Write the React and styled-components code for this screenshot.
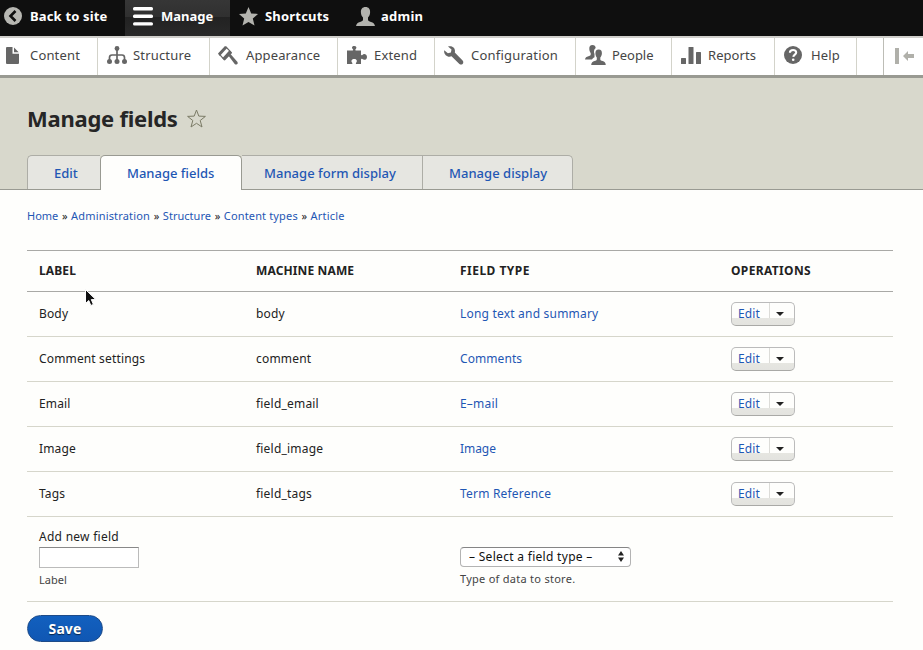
import React from "react";
import styled, { createGlobalStyle, css } from "styled-components";

const GlobalStyle = createGlobalStyle`
  * { box-sizing: border-box; }
  html, body { margin: 0; height: 100%; overflow: hidden; }
  body { background: #fefefc; color: #222; font: 12px/18px "Noto Sans", "Open Sans", sans-serif; }
  a { color: #1f57b4; text-decoration: none; }
`;

const Page = styled.div`
  width: 923px;
  height: 650px;
  overflow: hidden;
`;

const TopBar = styled.nav`
  display: flex;
  height: 36px;
  background: #0f0f0f;
`;

const Spaced = css`
  letter-spacing: ${(p) => p.$ls || 0}px;
  white-space: nowrap;
`;

const TopItem = styled.a`
  ${Spaced}
  && { color: #fff; }
  display: grid;
  grid-template-columns: ${(p) => p.$slot}px auto;
  justify-content: start;
  align-items: center;
  width: ${(p) => p.$w}px;
  padding: 0 0 4px ${(p) => p.$pad}px;
  font-size: 13px;
  font-weight: 700;
  ${(p) => p.$active && css`background: linear-gradient(#363636 0, #303030 17px, #222 17px, #292929 100%);`}
`;

const Tray = styled.nav`
  display: flex;
  height: 42px;
  background: #fff;
  border-top: 2px solid #d0cfcb;
  border-bottom: 3px solid #999a92;
  box-shadow: 0 1px 0 #c5c5b9;
`;

const TrayItem = styled.a`
  ${Spaced}
  && { color: #454545; }
  display: grid;
  grid-template-columns: ${(p) => p.$slot}px auto;
  justify-content: start;
  align-items: center;
  width: ${(p) => p.$w}px;
  padding: 0 0 3px ${(p) => p.$pad}px;
  border-right: 1px solid #d3d3ca;
  font-size: 13px;
`;

const TrayToggle = styled.div`
  display: flex;
  align-items: center;
  margin-left: 26px;
  width: 40px;
  padding: 0 0 2px 11px;
  border-left: 1px solid #bdbdb6;
`;

const Header = styled.header`
  display: flex;
  flex-direction: column;
  justify-content: space-between;
  height: 112px;
  padding: 25px 27px 0;
  background: #d8d8cc;
  border-bottom: 1px solid #999a92;
`;

const TitleRow = styled.div`
  display: flex;
  align-items: center;
  gap: 9px;
`;

const Title = styled.h1`
  margin: 0;
  font-size: 22px;
  line-height: 30px;
  letter-spacing: -0.25px;
  color: #262626;
`;

const Tabs = styled.div`
  display: flex;
  height: 34px;
`;

const Tab = styled.a`
  ${Spaced}
  width: ${(p) => p.$w}px;
  height: ${(p) => (p.$active ? 35 : 34)}px;
  padding-left: ${(p) => p.$pad}px;
  font-size: 13px;
  font-weight: 500;
  line-height: 34px;
  background: ${(p) => (p.$active ? "#fefefc" : "#e6e6e1")};
  border: 1px solid #adada6;
  border-width: 1px ${(p) => (p.$openRight ? 0 : 1)}px 0 ${(p) => (p.$left ? 1 : 0)}px;
  border-color: ${(p) => (p.$active ? "#999a92" : "#adada6")};
  border-radius: ${(p) => p.$radius};
`;

const Content = styled.main`
  padding: 16px 30px 0 27px;
`;

const Breadcrumb = styled.nav`
  height: 20px;
  font-size: 11px;
  line-height: 20px;
  white-space: nowrap;
  display: flex;
`;

const Crumb = styled.a`${Spaced}`;

const Arrow = styled.span`
  width: 12.8px;
  text-align: center;
`;

const Table = styled.table`
  width: 866px;
  margin-top: 24px;
  table-layout: fixed;
  border-collapse: separate;
  border-spacing: 0;
`;

const Th = styled.th`
  ${Spaced}
  width: ${(p) => p.$w}px;
  height: 42px;
  padding: 0 0 0 12px;
  text-align: left;
  font-weight: 700;
  border-top: 1px solid #a9a9a6;
  border-bottom: 1px solid #a9a9a6;
`;

const Td = styled.td`
  ${Spaced}
  height: ${(p) => p.$h || 45}px;
  padding: 0 0 0 12px;
  vertical-align: middle;
  border-bottom: 1px solid #d6d6cb;
`;

const DropButton = styled.div`
  display: grid;
  grid-template-columns: 37px 1fr;
  width: 64px;
  height: 24px;
  background: linear-gradient(#fefefc 0, #fefefc 15px, #e6e6e1 15px, #e3e3df 100%);
  border: 1px solid #bbb;
  border-bottom-color: #a9a9a6;
  border-radius: 5px;
`;

const DropAction = styled.a`
  padding-left: 6px;
  line-height: 21px;
  letter-spacing: 0.15px;
`;

const DropToggle = styled.span`
  display: flex;
  height: 22px;
  padding: 0 0 0 7px;
  align-items: center;
  background: linear-gradient(#dcdcd8, #dcdcd8) left top / 1px 15px no-repeat;
`;

const Field = styled.div`
  display: flex;
  flex-direction: column;
  height: 84px;
  padding-top: ${(p) => p.$top}px;
`;

const FieldLabel = styled.label`
  ${Spaced}
  height: 19px;
`;

const TextInput = styled.input`
  width: 100px;
  height: 21px;
  padding: 0;
  background: #fff;
  border: 1px solid #bbb;
  border-top-color: #888;
  border-radius: 0;
`;

const Hint = styled.div`
  ${Spaced}
  margin-top: 4px;
  font-size: 11px;
  line-height: 16px;
  color: #444;
`;

const Select = styled.div`
  display: flex;
  justify-content: space-between;
  align-items: center;
  width: 171px;
  height: 20px;
  padding: 0 6px 1px 8px;
  color: #111;
  letter-spacing: 0.3px;
  background: #fff;
  border: 1px solid #b3b3b3;
  border-top-color: #858585;
  border-radius: 4px;
`;

const SaveButton = styled.button`
  display: block;
  width: 76px;
  height: 27px;
  margin-top: 13px;
  padding: 1px 0 0;
  font: 700 14px/24px "Noto Sans", "Open Sans", sans-serif;
  letter-spacing: 0.1px;
  color: #fff;
  text-shadow: 0 1px 1px rgba(0, 0, 0, 0.6);
  background: linear-gradient(#1260bf, #1057b3);
  border: 1px solid #1e4b88;
  border-radius: 14px;
`;

const Pointer = styled.svg`
  position: absolute;
  left: 84px;
  top: 288px;
`;

const Svg = ({ w, h, children, ...rest }) => (
  <svg width={w} height={h} viewBox={`0 0 ${w} ${h}`} fill="#666" {...rest}>
    {children}
  </svg>
);

const BackIcon = () => (
  <Svg w={18} h={18}>
    <circle cx="9" cy="9" r="9" fill="#b7b7b2" />
    <path d="M11.500 4 6.500 9l5 5" stroke="#0f0f0f" strokeWidth="2.600" fill="none" />
  </Svg>
);
const MenuIcon = () => (
  <Svg w={20} h={19} fill="#fff">
    <rect width="20" height="3.400" rx="1.500" />
    <rect y="7.600" width="20" height="3.400" rx="1.500" />
    <rect y="15.200" width="20" height="3.400" rx="1.500" />
  </Svg>
);
const StarIcon = () => (
  <Svg w={19} h={19} fill="#b3b3ae">
    <path d="M9.500 0 12.200 6.400l6.800.5-5.200 4.600 1.700 6.900-6-3.500-6 3.500 1.700-6.900L0 6.900l6.800-.5z" />
  </Svg>
);
const UserIcon = () => (
  <Svg w={19} h={19} fill="#b3b3ae">
    <path d="M9.500 0C6.300 0 4.800 2.200 4.900 5.200c.1 2.300 1 4.300 2.100 5.300v2.200c0 1.200-1.200 1.700-3 2.300C1.800 15.700.5 16.500 0 19h19c-.5-2.500-1.800-3.300-4-4-1.800-.6-3-1.100-3-2.300v-2.200c1.100-1 2-3 2.100-5.300C14.200 2.200 12.700 0 9.500 0z" />
  </Svg>
);
const FileIcon = () => (
  <Svg w={13} h={17}>
    <path d="M1 0h5.500v6.700H13V16q0 1-1 1H1q-1 0-1-1V1q0-1 1-1zM8 .5 12.700 5.200H8z" />
  </Svg>
);
const StructureIcon = () => (
  <Svg w={20} h={18}>
    <circle cx="10" cy="2.500" r="2.400" />
    <path d="M10 3v11M2.500 15v-3.500q0-2.500 2.500-2.500h10q2.500 0 2.500 2.500V15" fill="none" stroke="#666" strokeWidth="1.700" />
    <circle cx="2.500" cy="15.400" r="2.500" />
    <circle cx="10" cy="15.400" r="2.500" />
    <circle cx="17.500" cy="15.400" r="2.500" />
  </Svg>
);
const AppearanceIcon = () => (
  <Svg w={20} h={19}>
    <path d="M0 7.500 7 0l2.200 2-7.400 7.900zM4.300 12.300l7.200-8L14 7l-7.200 7.500z" />
    <path d="M1.400 8.200 8 1l5.200 5.400-7 7.200z" fill="none" stroke="#666" strokeWidth="1.200" />
    <path d="m10.500 9.800 2-1.800 6.800 7.800q1 1.500-.3 2.500-1.200.8-2.300-.4z" />
  </Svg>
);
const ExtendIcon = () => (
  <Svg w={20} h={18}>
    <path d="M0 4.500h5.600c.8 0 .7-1 .1-1.500C4.500 2 4.800 0 7.200 0s2.800 2 1.600 3c-.7.500-.7 1.500.1 1.500H14v4c0 1 .9 1 1.400.4C16.700 7.300 20 8 20 11s-3.300 3.500-4.600 2c-.5-.6-1.400-.5-1.400.5V18H9.500c-.9 0-.7-1-.2-1.600 1.300-1.500.3-3.400-2.100-3.400s-3.500 1.900-2.200 3.400c.6.600.6 1.600-.2 1.600H0z" />
  </Svg>
);
const WrenchIcon = () => (
  <Svg w={20} h={19}>
    <path d="M4 .6C6.800-.6 11 .8 11 5c0 .7-.1 1-.2 1.500l7.800 8c2 2.200-.8 5.500-3.200 3.400L7.500 10.300C3.500 11.800-.5 8.500.2 4.200l3.700 3 3-.8.6-3z" />
  </Svg>
);
const PeopleIcon = () => (
  <Svg w={21} h={20}>
    <path d="M7.500 0C5.200 0 4.200 1.600 4.300 4c.1 1.700.6 3.200 1.400 4v1.600c0 1-1 1.300-2.300 1.700C1.500 11.900.3 12.500 0 14.500h7c.5-1.200 2-1.800 2.500-2.200V9c-.8-1.500-.9-4.700 1.200-6C10.500 1.200 9.500 0 7.500 0z" />
    <path d="M13.700 4.500c-2.400 0-3.400 1.600-3.300 4 .1 1.700.6 3.200 1.400 4v2c0 .9-1 1.200-2.300 1.600C7.500 16.800 6.500 17.500 6.200 20h14.600c-.3-2.500-1.300-3.200-3.200-3.900-1.300-.4-2.300-.7-2.300-1.600v-2c.8-.8 1.500-2.300 1.600-4 .1-2.400-.9-4-3.200-4z" />
  </Svg>
);
const ReportsIcon = () => (
  <Svg w={20} h={17}>
    <rect y="11" width="5" height="6" rx=".5" />
    <rect x="7.500" width="5" height="17" rx=".5" />
    <rect x="15" y="5" width="5" height="12" rx=".5" />
  </Svg>
);
const HelpIcon = () => (
  <Svg w={18} h={18}>
    <circle cx="9" cy="9" r="9" />
    <path d="M5.900 6.700c.1-3.600 6.400-3.500 6.300-.1 0 2-2.700 2.100-2.900 4.300" stroke="#fff" strokeWidth="2.100" fill="none" />
    <circle cx="9.200" cy="13.800" r="1.300" fill="#fff" />
  </Svg>
);

const topItems = [
  { label: "Back to site", Icon: BackIcon, w: 125, pad: 4, slot: 26, ls: 0.16 },
  { label: "Manage", Icon: MenuIcon, w: 105, pad: 8, slot: 28 , active: true },
  { label: "Shortcuts", Icon: StarIcon, w: 117, pad: 9, slot: 26, ls: 0.2 },
  { label: "admin", Icon: UserIcon, w: 120, pad: 9, slot: 25, ls: 0.25 },
];

const trayItems = [
  { label: "Content", Icon: FileIcon, w: 98, pad: 6, slot: 24, ls: 0.16 },
  { label: "Structure", Icon: StructureIcon, w: 112, pad: 9, slot: 26, ls: 0.17 },
  { label: "Appearance", Icon: AppearanceIcon, w: 128, pad: 8, slot: 28, ls: 0.13 },
  { label: "Extend", Icon: ExtendIcon, w: 97, pad: 9, slot: 27, ls: 0.16 },
  { label: "Configuration", Icon: WrenchIcon, w: 141, pad: 9, slot: 27, ls: 0.21 },
  { label: "People", Icon: PeopleIcon, w: 96, pad: 9, slot: 27, ls: -0.05 },
  { label: "Reports", Icon: ReportsIcon, w: 103, pad: 9, slot: 27, ls: 0.06 },
  { label: "Help", Icon: HelpIcon, w: 82, pad: 9, slot: 27, ls: 0.17 },
];

const tabs = [
  { label: "Edit", w: 73, pad: 26, radius: "5px 0 0 0", left: true, openRight: true },
  { label: "Manage fields", w: 142, pad: 26, radius: "5px 5px 0 0", left: true, active: true },
  { label: "Manage form display", w: 181, pad: 22, radius: "0", ls: 0.03 },
  { label: "Manage display", w: 150, pad: 26, radius: "0 5px 0 0", ls: 0.03 },
];

const crumbs = [
  { label: "Home" },
  { label: "Administration", ls: 0.17 },
  { label: "Structure", ls: 0.03 },
  { label: "Content types", ls: 0.15 },
  { label: "Article", ls: 0.19 },
];

const columns = [
  { label: "LABEL", w: 217, ls: 0.12 },
  { label: "MACHINE NAME", w: 204, ls: 0.13 },
  { label: "FIELD TYPE", w: 271, ls: 0.48 },
  { label: "OPERATIONS", w: 174, ls: 0.35 },
];

const rows = [
  { label: "Body", machine: "body", type: "Long text and summary", ls: 0.2 },
  { label: "Comment settings", machine: "comment", type: "Comments", ls: 0.08 },
  { label: "Email", machine: "field_email", type: "E–mail", ls: 0.2 },
  { label: "Image", machine: "field_image", type: "Image", ls: -0.05 },
  { label: "Tags", machine: "field_tags", type: "Term Reference", ls: 0.2 },
];

export default function App() {
  return (
    <Page>
      <GlobalStyle />
      <TopBar>
        {topItems.map(({ label, Icon, w, pad, slot, ls, active }) => (
          <TopItem key={label} $w={w} $pad={pad} $slot={slot} $ls={ls} $active={active}>
            <Icon />
            {label}
          </TopItem>
        ))}
      </TopBar>
      <Tray>
        {trayItems.map(({ label, Icon, w, pad, slot, ls }) => (
          <TrayItem key={label} $w={w} $pad={pad} $slot={slot} $ls={ls}>
            <Icon />
            {label}
          </TrayItem>
        ))}
        <TrayToggle>
          <Svg w={20} h={16} fill="#b0b0aa">
            <rect width="4" height="16" />
            <path d="M8 8l5-5V6h6v4h-6v3z" />
          </Svg>
        </TrayToggle>
      </Tray>
      <Header>
        <TitleRow>
          <Title>Manage fields</Title>
          <Svg w={19} h={19} fill="none" stroke="#7b7b66" strokeWidth="1">
            <path d="M9.500 1 11.800 7.100l6.600.3-5.200 4.100 1.800 6.500-5.500-3.700L4 18l1.800-6.500L.6 7.400l6.600-.3z" />
          </Svg>
        </TitleRow>
        <Tabs>
          {tabs.map((t) => (
            <Tab
              key={t.label}
              $w={t.w}
              $pad={t.pad}
              $radius={t.radius}
              $left={t.left}
              $openRight={t.openRight}
              $active={t.active}
              $ls={t.ls}
            >
              {t.label}
            </Tab>
          ))}
        </Tabs>
      </Header>
      <Content>
        <Breadcrumb>
          {crumbs.map((c, i) => (
            <React.Fragment key={c.label}>
              {i > 0 && <Arrow>»</Arrow>}
              <Crumb $ls={c.ls}>{c.label}</Crumb>
            </React.Fragment>
          ))}
        </Breadcrumb>
        <Table>
          <thead>
            <tr>
              {columns.map((c) => (
                <Th key={c.label} $w={c.w} $ls={c.ls}>{c.label}</Th>
              ))}
            </tr>
          </thead>
          <tbody>
            {rows.map(({ label, machine, type, ls }) => (
              <tr key={label}>
                <Td $ls={0.15}>{label}</Td>
                <Td $ls={0.2}>{machine}</Td>
                <Td $ls={ls}><a>{type}</a></Td>
                <Td>
                  <DropButton>
                    <DropAction>Edit</DropAction>
                    <DropToggle>
                      <Svg w={8} h={4} fill="#222"><path d="M0 0h8L4 4z" /></Svg>
                    </DropToggle>
                  </DropButton>
                </Td>
              </tr>
            ))}
            <tr>
              <Td $h={85} colSpan={2}>
                <Field $top={11}>
                  <FieldLabel $ls={0.27}>Add new field</FieldLabel>
                  <TextInput />
                  <Hint>Label</Hint>
                </Field>
              </Td>
              <Td $h={85} colSpan={2}>
                <Field $top={30}>
                  <Select>
                    <span>– Select a field type –</span>
                    <Svg w={6} h={11} fill="#222"><path d="M0 4.500h6L3 0zM0 6.500h6L3 11z" /></Svg>
                  </Select>
                  <Hint $ls={0.27}>Type of data to store.</Hint>
                </Field>
              </Td>
            </tr>
          </tbody>
        </Table>
        <SaveButton>Save</SaveButton>
      </Content>
      <Pointer width="14" height="20" viewBox="0 0 14 20">
        <path d="M1.500 1.500v14l3.300-3 2 5 2.600-1.100-2.100-4.800h4.500z" fill="#111" stroke="#fff" strokeWidth="1" />
      </Pointer>
    </Page>
  );
}
